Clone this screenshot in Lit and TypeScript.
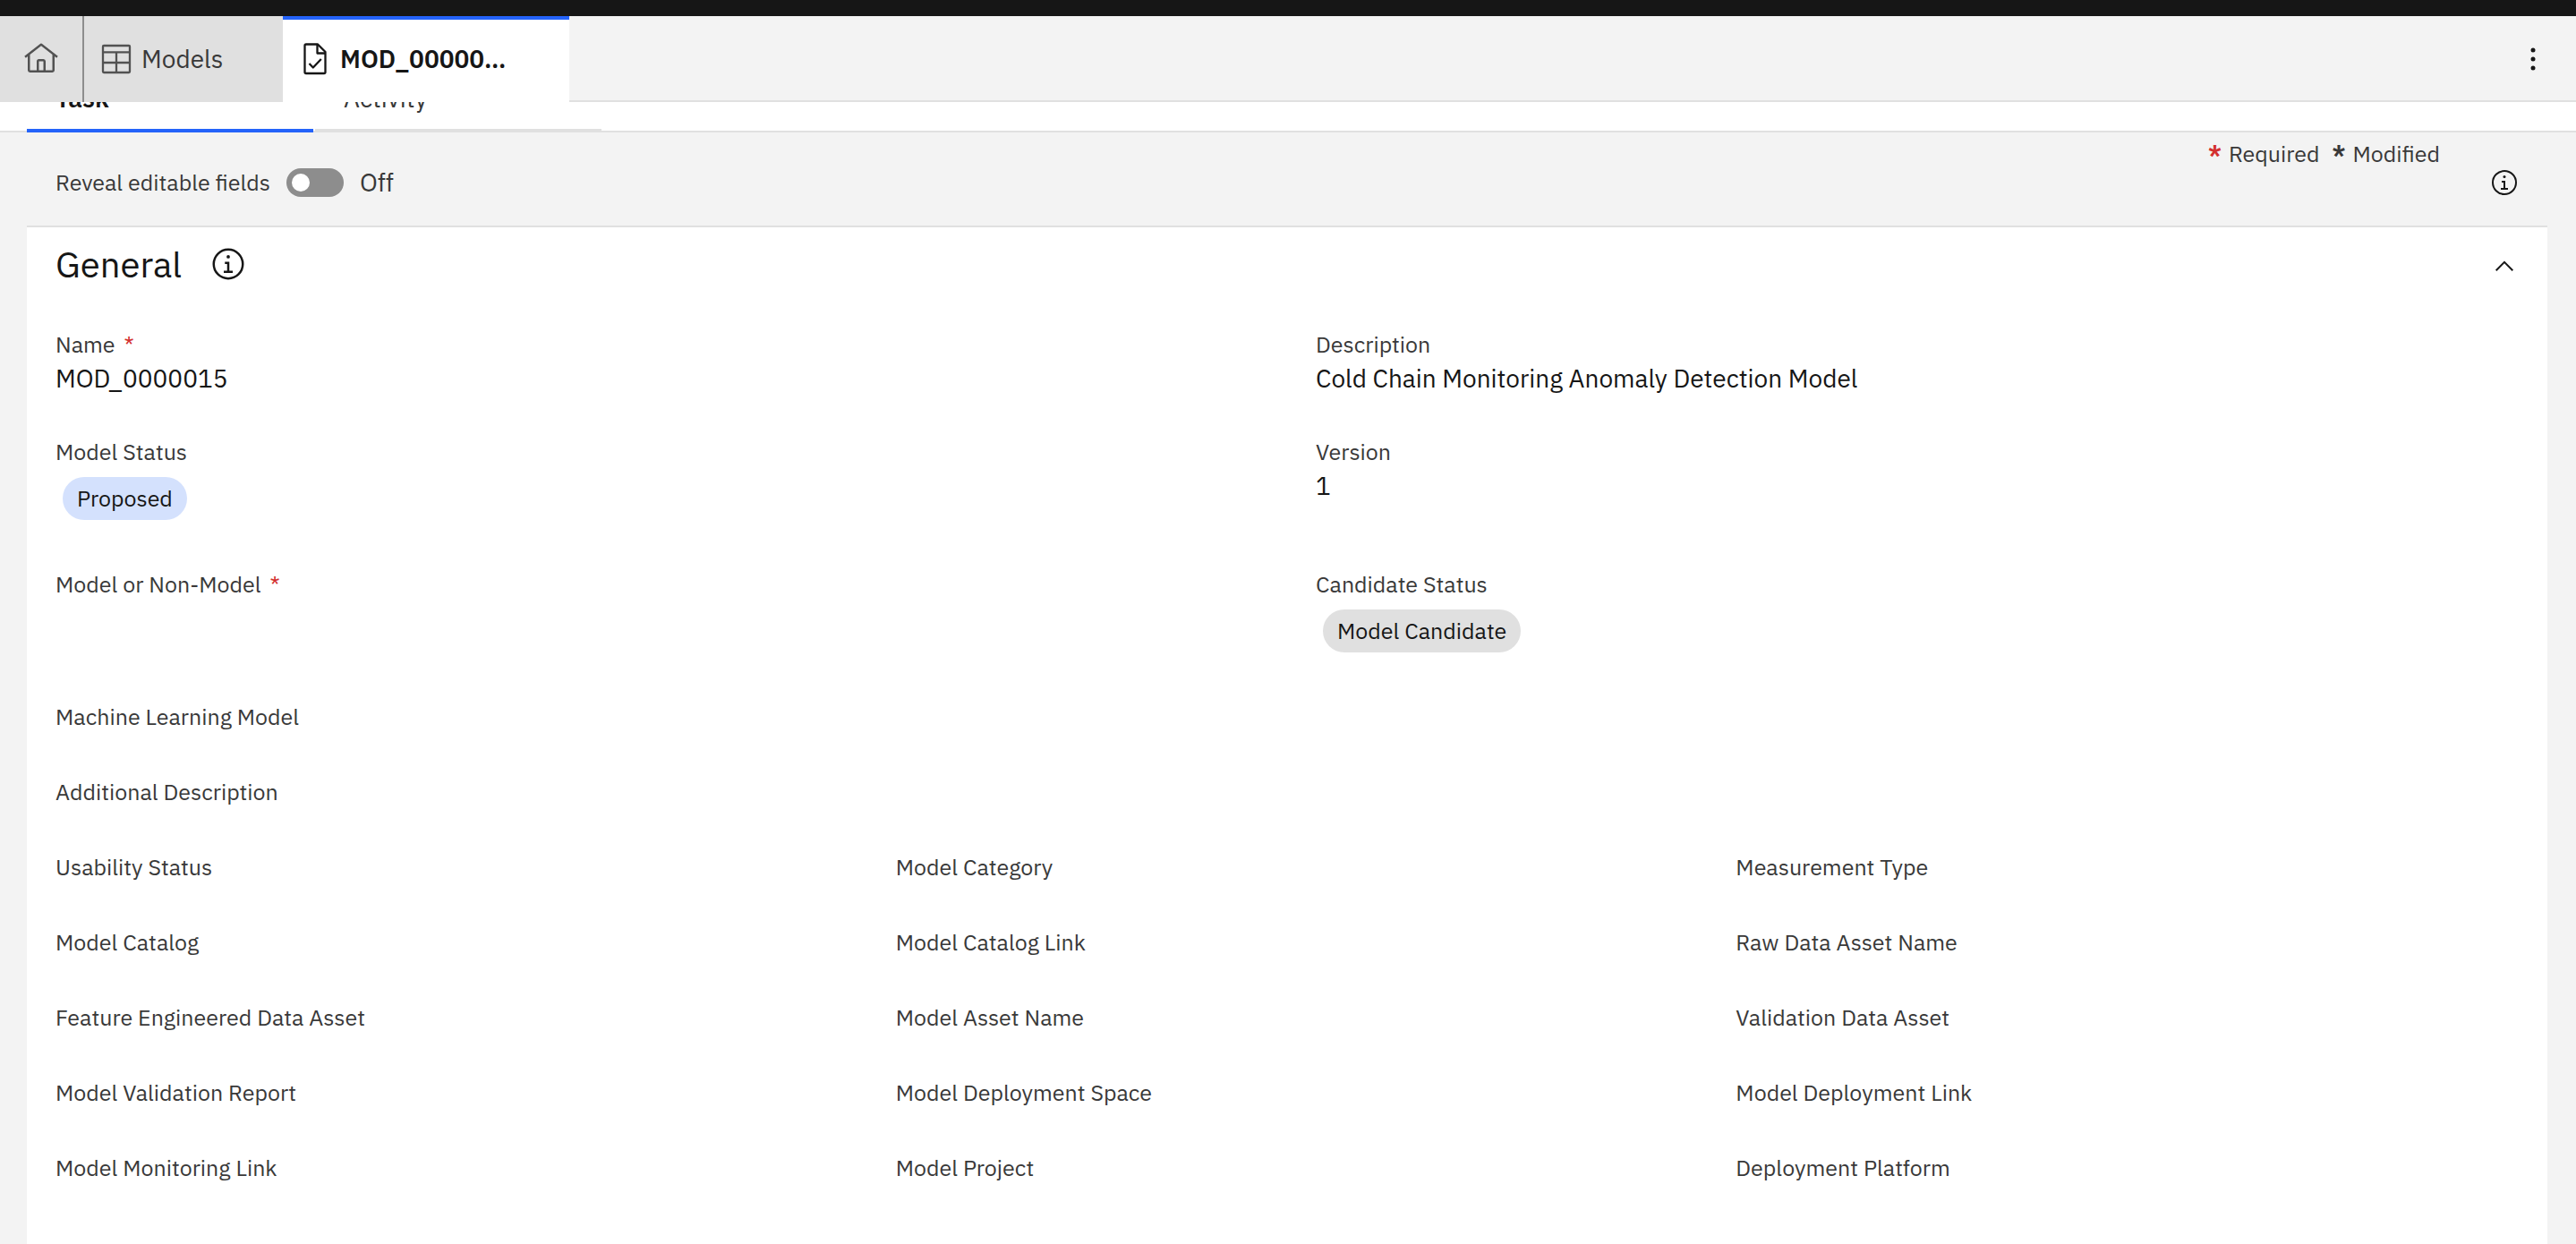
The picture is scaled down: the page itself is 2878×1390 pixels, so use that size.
import { LitElement, html, css, svg, nothing } from "lit";
import { customElement, state } from "lit/decorators.js";

interface Field {
  label: string;
  value?: string;
  tag?: "blue" | "gray";
  required?: boolean;
}

interface Row {
  columns: "one" | "two" | "three";
  fields: Field[];
}

const ROWS: Row[] = [
  {
    columns: "two",
    fields: [
      { label: "Name", value: "MOD_0000015", required: true },
      { label: "Description", value: "Cold Chain Monitoring Anomaly Detection Model" },
    ],
  },
  {
    columns: "two",
    fields: [
      { label: "Model Status", value: "Proposed", tag: "blue" },
      { label: "Version", value: "1" },
    ],
  },
  {
    columns: "two",
    fields: [
      { label: "Model or Non-Model", required: true },
      { label: "Candidate Status", value: "Model Candidate", tag: "gray" },
    ],
  },
  { columns: "one", fields: [{ label: "Machine Learning Model" }] },
  { columns: "one", fields: [{ label: "Additional Description" }] },
  {
    columns: "three",
    fields: [{ label: "Usability Status" }, { label: "Model Category" }, { label: "Measurement Type" }],
  },
  {
    columns: "three",
    fields: [{ label: "Model Catalog" }, { label: "Model Catalog Link" }, { label: "Raw Data Asset Name" }],
  },
  {
    columns: "three",
    fields: [
      { label: "Feature Engineered Data Asset" },
      { label: "Model Asset Name" },
      { label: "Validation Data Asset" },
    ],
  },
  {
    columns: "three",
    fields: [
      { label: "Model Validation Report" },
      { label: "Model Deployment Space" },
      { label: "Model Deployment Link" },
    ],
  },
  {
    columns: "three",
    fields: [{ label: "Model Monitoring Link" }, { label: "Model Project" }, { label: "Deployment Platform" }],
  },
];

const infoShape = svg`
  <circle cx="16" cy="16" r="13" fill="none" stroke="currentColor" stroke-width="2"></circle>
  <path d="M17 22V14H13V16H15V22H12V24H20V22Z"></path>
  <circle cx="16" cy="9.5" r="1.5"></circle>`;

@customElement("app-root")
export class AppRoot extends LitElement {
  @state() private open = true;
  @state() private reveal = false;

  static styles = css`
    :host {
      display: flex;
      flex-direction: column;
      min-height: 100vh;
      background: #f3f3f3;
      color: #161616;
      font-family: "IBM Plex Sans", Roboto, "Liberation Sans", sans-serif;
      font-size: 28px;
      line-height: 36px;
    }
    * {
      box-sizing: border-box;
    }
    button {
      margin: 0;
      padding: 0;
      border: 0;
      background: none;
      color: inherit;
      font: inherit;
      text-align: left;
      cursor: pointer;
    }
    svg {
      display: block;
      flex: none;
      fill: currentColor;
    }
    .icon {
      width: 32px;
      height: 32px;
    }
    .icon-large {
      width: 40px;
      height: 40px;
    }
    .line {
      fill: none;
      stroke: currentColor;
      stroke-width: 2.3;
      stroke-linejoin: round;
    }
    .masthead {
      height: 18px;
      background: #161616;
    }
    .workspace {
      display: flex;
      height: 96px;
      box-shadow: inset 0 -2px #e0e0e0;
    }
    .page-tab {
      display: flex;
      align-items: center;
      gap: 8px;
      padding: 0 16px;
      background: #e0e0e0;
      color: #393939;
    }
    .page-tab svg {
      color: #525252;
    }
    .home {
      width: 94px;
      padding: 0 26px;
      border-right: 2px solid #8d8d8d;
    }
    .models {
      width: 222px;
    }
    .current,
    .current svg {
      color: #161616;
    }
    .current {
      width: 320px;
      background: #fff;
      font-weight: 600;
      box-shadow: inset 0 4px #2463fa;
    }
    .page-name {
      max-width: 192px;
      overflow: hidden;
      text-overflow: ellipsis;
      white-space: nowrap;
    }
    .overflow-menu {
      display: flex;
      align-items: center;
      justify-content: center;
      width: 96px;
      margin-left: auto;
    }
    .view-tabs {
      display: flex;
      align-items: flex-end;
      gap: 2px;
      height: 34px;
      padding: 0 30px;
      overflow: hidden;
      background: #fff;
      box-shadow: inset 0 -2px #e0e0e0;
    }
    .view-tab {
      flex: none;
      width: 320px;
      height: 72px;
      padding: 0 32px;
      border-bottom: 4px solid #e0e0e0;
      color: #393939;
    }
    .view-tab.selected {
      border-color: #2463fa;
      color: #161616;
      font-weight: 600;
    }
    .toolbar {
      display: flex;
      align-items: center;
      min-height: 104px;
      margin: 0 32px 0 30px;
      padding: 8px 24px 0 32px;
      color: #393939;
    }
    .small {
      font-size: 25px;
      line-height: 32px;
    }
    .switch {
      display: flex;
      align-items: center;
      gap: 18px;
    }
    .switch input {
      appearance: none;
      display: flex;
      align-items: center;
      width: 64px;
      height: 32px;
      margin: 0;
      padding: 0 6px;
      border-radius: 16px;
      background: #8d8d8d;
      cursor: pointer;
    }
    .switch input::before {
      content: "";
      width: 20px;
      height: 20px;
      border-radius: 50%;
      background: #fff;
    }
    .switch input:checked {
      justify-content: flex-end;
      background: #24a148;
    }
    .legend {
      display: flex;
      align-self: flex-start;
      gap: 14px;
      margin-left: auto;
      margin-right: 48px;
    }
    .legend-item {
      display: flex;
      gap: 8px;
    }
    .mark {
      font-weight: 700;
    }
    .red {
      color: #d3302f;
    }
    .square {
      display: flex;
      align-items: center;
      justify-content: center;
      width: 48px;
      height: 48px;
      color: #161616;
    }
    .panel {
      flex: 1;
      margin: 0 32px 0 30px;
      border-top: 2px solid #e0e0e0;
      background: #fff;
    }
    .panel-head {
      display: flex;
      align-items: center;
      min-height: 82px;
      padding: 0 24px 0 32px;
    }
    .panel-title {
      margin: 0 28px 0 0;
      font-size: 40px;
      font-weight: 400;
      line-height: 48px;
    }
    .toggle {
      margin-left: auto;
    }
    .fields {
      margin: 0;
      padding-top: 33px;
    }
    .row {
      display: grid;
    }
    .one {
      grid-template-columns: 1fr;
    }
    .two {
      grid-template-columns: repeat(2, 1fr);
    }
    .three {
      grid-template-columns: repeat(3, 1fr);
    }
    .field {
      display: flex;
      flex-direction: column;
      align-items: flex-start;
      gap: 4px;
      padding: 0 32px 48px;
    }
    .field dt {
      display: flex;
      gap: 10px;
      color: #393939;
    }
    .field dd {
      margin: 0;
    }
    .field .tag {
      margin: 8px;
      padding: 8px 16px;
      border-radius: 24px;
    }
    .blue {
      background: #d4e1fd;
    }
    .gray {
      background: #e0e0e0;
    }
  `;

  private renderField(f: Field) {
    return html`<div class="field">
      <dt class="small">${f.label}${f.required ? html`<span class="red">*</span>` : nothing}</dt>
      <dd class=${f.tag ? `small tag ${f.tag}` : ""}>${f.value ?? nothing}</dd>
    </div>`;
  }

  render() {
    return html`
      <div class="masthead"></div>
      <nav class="workspace" aria-label="Open pages">
        <button class="page-tab home" aria-label="Home">
          <svg class="icon-large" viewBox="0 0 32 32">
            <path
              d="M16.6123,2.2138a1.01,1.01,0,0,0-1.2427,0L1,13.4194l1.2427,1.5717L4,13.6209V26a2.0041,2.0041,0,0,0,2,2H26a2.0037,2.0037,0,0,0,2-2V13.63L29.7573,15,31,13.4282ZM18,26H14V18h4Zm2,0V18a2.0023,2.0023,0,0,0-2-2H14a2.002,2.002,0,0,0-2,2v8H6V12.0615l10-7.79,10,7.8005V26Z"
            ></path>
          </svg>
        </button>
        <button class="page-tab models">
          <svg class="icon-large" viewBox="0 0 40 40">
            <rect class="line" x="5" y="5" width="30" height="30" rx="1"></rect>
            <path class="line" d="M5 12.4H35M5 24H35M20 12.4V35"></path>
          </svg>
          <span class="page-name">Models</span>
        </button>
        <button class="page-tab current" aria-current="page">
          <svg class="icon-large" viewBox="0 0 40 40">
            <path class="line" d="M23 3.5H10Q8.5 3.5 8.5 5V34.5Q8.5 36 10 36H30Q31.5 36 31.5 34.5V12Z"></path>
            <path class="line" d="M22.5 3.5V13.500H31.500M13.500 25L17.800 29.500L26.800 20"></path>
          </svg>
          <span class="page-name">MOD_0000015</span>
        </button>
        <button class="overflow-menu" aria-label="More actions">
          <svg class="icon-large" viewBox="0 0 32 32">
            <circle cx="16" cy="8" r="2"></circle>
            <circle cx="16" cy="16" r="2"></circle>
            <circle cx="16" cy="24" r="2"></circle>
          </svg>
        </button>
      </nav>
      <div class="view-tabs" role="tablist">
        <button class="view-tab selected" role="tab" aria-selected="true">Task</button>
        <button class="view-tab" role="tab" aria-selected="false">Activity</button>
      </div>
      <div class="toolbar">
        <div class="switch">
          <label class="small" for="reveal">Reveal editable fields</label>
          <input
            id="reveal"
            type="checkbox"
            role="switch"
            .checked=${this.reveal}
            @change=${() => (this.reveal = !this.reveal)}
          />
          <span>${this.reveal ? "On" : "Off"}</span>
        </div>
        <div class="legend small">
          <span class="legend-item"><span class="mark red">*</span>Required</span>
          <span class="legend-item"><span class="mark">*</span>Modified</span>
        </div>
        <button class="square" aria-label="Information">
          <svg class="icon" viewBox="0 0 32 32">${infoShape}</svg>
        </button>
      </div>
      <section class="panel">
        <div class="panel-head">
          <h2 class="panel-title">General</h2>
          <button class="square" aria-label="About this section">
            <svg class="icon-large" viewBox="0 0 32 32">${infoShape}</svg>
          </button>
          <button
            class="square toggle"
            aria-label="Collapse section"
            aria-expanded=${this.open ? "true" : "false"}
            @click=${() => (this.open = !this.open)}
          >
            <svg class="icon" viewBox="0 0 32 32">
              <path d="M16 12.500 26 22.500 24.600 23.900 16 15.300 7.400 23.900 6 22.500Z"></path>
            </svg>
          </button>
        </div>
        ${this.open
          ? html`<dl class="fields">
              ${ROWS.map((r) => html`<div class="row ${r.columns}">${r.fields.map((f) => this.renderField(f))}</div>`)}
            </dl>`
          : nothing}
      </section>
    `;
  }
}
